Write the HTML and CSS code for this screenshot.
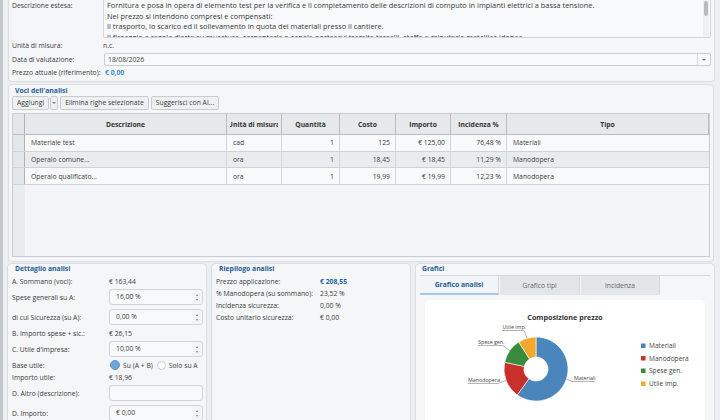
FILE: index.html
```html
<!DOCTYPE html>
<html lang="it">
<head>
    <meta charset="UTF-8">
    <meta name="viewport" content="width=device-width, initial-scale=1.0">
    <title>Analisi prezzo</title>
    <link rel="stylesheet" href="styles.css">
</head>
<body>
    <div class="info-panel">
        <div class="info-grid">
            <span class="lbl lbl-top">Descrizione estesa:</span>
            <div class="desc-box">
                <p>Fornitura e posa in opera di elemento test per la verifica e il completamento delle descrizioni di computo in impianti elettrici a bassa tensione.</p>
                <p>Nel prezzo si intendono compresi e compensati:</p>
                <p>Il trasporto, lo scarico ed il sollevamento in quota dei materiali presso il cantiere.</p>
                <p>Il fissaggio a regola d'arte su muratura, carpenteria o canale portacavi tramite tasselli, staffe e minuteria metallica idonea.</p>
                <div class="vscroll"><div class="vthumb"></div></div>
            </div>
            <span class="lbl">Unità di misura:</span>
            <span class="val">n.c.</span>
            <span class="lbl">Data di valutazione:</span>
            <div class="combo"><span class="combo-text">18/08/2026</span><span class="combo-btn"><i class="caret"></i></span></div>
            <span class="lbl">Prezzo attuale (riferimento):</span>
            <span class="val price-ref">€ 0,00</span>
        </div>
    </div>

    <div class="group voci">
        <div class="group-title">Voci dell'analisi</div>
        <div class="toolbar">
            <button class="btn">Aggiungi</button>
            <button class="btn btn-drop"><i class="caret"></i></button>
            <button class="btn">Elimina righe selezionate</button>
            <button class="btn">Suggerisci con AI...</button>
        </div>
        <div class="grid-table">
            <div class="tr th">
                <div class="rh"></div>
                <div class="td"><span>Descrizione</span></div>
                <div class="td"><span>Unità di misura</span></div>
                <div class="td"><span>Quantità</span></div>
                <div class="td"><span>Costo</span></div>
                <div class="td"><span>Importo</span></div>
                <div class="td"><span>Incidenza %</span></div>
                <div class="td"><span>Tipo</span></div>
            </div>
            <div class="tr">
                <div class="rh"></div>
                <div class="td">Materiale test</div>
                <div class="td">cad</div>
                <div class="td num">1</div>
                <div class="td num">125</div>
                <div class="td num">€ 125,00</div>
                <div class="td num">76,48 %</div>
                <div class="td">Materiali</div>
            </div>
            <div class="tr alt">
                <div class="rh"></div>
                <div class="td">Operaio comune...</div>
                <div class="td">ora</div>
                <div class="td num">1</div>
                <div class="td num">18,45</div>
                <div class="td num">€ 18,45</div>
                <div class="td num">11,29 %</div>
                <div class="td">Manodopera</div>
            </div>
            <div class="tr">
                <div class="rh"></div>
                <div class="td">Operaio qualificato...</div>
                <div class="td">ora</div>
                <div class="td num">1</div>
                <div class="td num">19,99</div>
                <div class="td num">€ 19,99</div>
                <div class="td num">12,23 %</div>
                <div class="td">Manodopera</div>
            </div>
            <div class="table-fill"></div>
        </div>
    </div>

    <div class="bottom">
        <div class="group dettaglio">
            <div class="group-title">Dettaglio analisi</div>
            <div class="drow"><span>A. Sommano (voci):</span><span>€ 163,44</span></div>
            <div class="drow field">
                <span>Spese generali su A:</span>
                <div class="input"><span class="input-text">16,00 %</span><span class="spin"><i class="up"></i><i class="down"></i></span></div>
            </div>
            <div class="drow field">
                <span>di cui Sicurezza (su A):</span>
                <div class="input"><span class="input-text">0,00 %</span><span class="spin"><i class="up"></i><i class="down"></i></span></div>
            </div>
            <div class="drow"><span>B. Importo spese + sic.:</span><span>€ 26,15</span></div>
            <div class="drow field">
                <span>C. Utile d'impresa:</span>
                <div class="input"><span class="input-text">10,00 %</span><span class="spin"><i class="up"></i><i class="down"></i></span></div>
            </div>
            <div class="drow">
                <span>Base utile:</span>
                <div class="radios">
                    <span class="radio checked"></span><span>Su (A + B)</span>
                    <span class="radio"></span><span>Solo su A</span>
                </div>
            </div>
            <div class="drow"><span>Importo utile:</span><span>€ 18,96</span></div>
            <div class="drow field">
                <span>D. Altro (descrizione):</span>
                <div class="input"><span class="input-text"></span></div>
            </div>
            <div class="drow field">
                <span>D. Importo:</span>
                <div class="input"><span class="input-text">€ 0,00</span><span class="spin"><i class="up"></i><i class="down"></i></span></div>
            </div>
        </div>

        <div class="group riepilogo">
            <div class="group-title">Riepilogo analisi</div>
            <div class="rrow"><span>Prezzo applicazione:</span><span class="price-app">€ 208,55</span></div>
            <div class="rrow"><span>% Manodopera (su sommano):</span><span>23,52 %</span></div>
            <div class="rrow"><span>Incidenza sicurezza:</span><span>0,00 %</span></div>
            <div class="rrow"><span>Costo unitario sicurezza:</span><span>€ 0,00</span></div>
        </div>

        <div class="group grafici">
            <div class="group-title">Grafici</div>
            <div class="tabs">
                <div class="tab active">Grafico analisi</div>
                <div class="tab">Grafico tipi</div>
                <div class="tab">Incidenza</div>
            </div>
            <div class="chart-card">
                <svg class="chart" width="280" height="122" viewBox="0 0 280 122">
                    <text x="140" y="19.5" text-anchor="middle" class="chart-title">Composizione prezzo</text>
                    <g stroke="#ffffff" stroke-width="0.6">
                        <path d="M111 37 A32 32 0 1 1 92.28 94.96 L103.98 78.73 A12 12 0 1 0 111 57 Z" fill="#4a86bb"/>
                        <path d="M92.28 94.96 A32 32 0 0 1 79.72 62.24 L99.27 66.46 A12 12 0 0 0 103.98 78.73 Z" fill="#c8302c"/>
                        <path d="M79.72 62.24 A32 32 0 0 1 93.71 42.07 L104.52 58.9 A12 12 0 0 0 99.27 66.46 Z" fill="#3a8b3e"/>
                        <path d="M93.71 42.07 A32 32 0 0 1 111 37 L111 57 A12 12 0 0 0 104.52 58.9 Z" fill="#f2a92b"/>
                    </g>
                    <g stroke="#666" stroke-width="0.5" fill="none">
                        <polyline points="141.5,79 147,81.5 170,81.5"/>
                        <polyline points="81,80.5 73,83.5 43,83.5"/>
                        <polyline points="85,51 78,45.5 53,45.5"/>
                        <polyline points="102,38 99,30.5 77,30.5"/>
                    </g>
                    <g class="slice-label">
                        <text x="149" y="80">Materiali</text>
                        <text x="43" y="82">Manodopera</text>
                        <text x="53" y="44">Spese gen.</text>
                        <text x="77.5" y="29">Utile imp.</text>
                    </g>
                    <g class="legend">
                        <rect x="216" y="43.5" width="4.5" height="4.5" fill="#4a86bb"/>
                        <text x="224" y="48.3">Materiali</text>
                        <rect x="216" y="56" width="4.5" height="4.5" fill="#c8302c"/>
                        <text x="224" y="60.8">Manodopera</text>
                        <rect x="216" y="68.5" width="4.5" height="4.5" fill="#3a8b3e"/>
                        <text x="224" y="73.3">Spese gen.</text>
                        <rect x="216" y="81.5" width="4.5" height="4.5" fill="#f2a92b"/>
                        <text x="224" y="86.3">Utile imp.</text>
                    </g>
                </svg>
            </div>
        </div>
    </div>
</body>
</html>
```

FILE: styles.css
```css
* {
    box-sizing: border-box;
}
html, body {
    margin: 0;
    padding: 0;
}
body {
    width: 720px;
    height: 420px;
    overflow: hidden;
    font-family: "Open Sans", "Noto Sans", sans-serif;
    font-size: 6.8px;
    color: #3c3c3c;
    background-color: #eceff2;
    border-left: 3px solid #c3c7cc;
}

/* ---- top info panel ---- */
.info-panel {
    margin: 0 5px 0 5px;
    height: 82px;
    padding: 0 3px 2px 3px;
    background: #f4f6f8;
    border: 1px solid #dadee3;
    border-top: none;
    border-radius: 0 0 4px 4px;
}
.info-grid {
    display: grid;
    grid-template-columns: 91px 1fr;
    grid-template-rows: 38px 14px 14px 13px;
    align-items: end;
}
.lbl, .val {
    line-height: 12px;
    white-space: nowrap;
}
.lbl-top {
    align-self: start;
}
.price-ref {
    color: #3d8fd1;
    font-weight: bold;
    padding-left: 2px;
}
.desc-box {
    position: relative;
    align-self: start;
    margin-top: -5px;
    height: 43px;
    border: 1px solid #d3d7dc;
    border-radius: 2px;
    background: #f8f9fb;
    padding: 4px 10px 0 3px;
    font-size: 7.4px;
    line-height: 10.7px;
    color: #383838;
    overflow: hidden;
}
.desc-box p {
    margin: 0;
    white-space: nowrap;
}
.vscroll {
    position: absolute;
    top: 0;
    right: 1px;
    width: 6px;
    height: 100%;
    background: #eef0f2;
}
.vthumb {
    margin: 5px 1px 0 1px;
    height: 15px;
    border-radius: 2px;
    background: #b8bcc1;
}
.combo {
    display: flex;
    height: 13px;
    margin-left: 1px;
    border: 1px solid #c9cdd2;
    border-radius: 2px;
    background: #f8f9fb;
}
.combo-text {
    flex: 1;
    line-height: 11px;
    padding-left: 3px;
}
.combo-btn {
    width: 13px;
    display: flex;
    align-items: center;
    justify-content: center;
    border-left: 1px solid #d8dbdf;
}
.caret {
    width: 0;
    height: 0;
    border-left: 2px solid transparent;
    border-right: 2px solid transparent;
    border-top: 2px solid #777;
}

/* ---- group boxes ---- */
.group {
    background: #f4f6f8;
    border: 1px solid #dadee3;
    border-radius: 4px;
}
.group-title {
    color: #1e5c98;
    font-weight: bold;
    height: 11px;
    line-height: 9px;
    padding-left: 3px;
    white-space: nowrap;
}

/* ---- voci dell'analisi ---- */
.voci {
    margin: 2px 6px 0 5px;
    height: 178px;
    padding: 0 3px 4px 3px;
    display: flex;
    flex-direction: column;
}
.voci .group-title {
    line-height: 11px;
}
.toolbar {
    display: flex;
    height: 14px;
    gap: 2px;
}
.btn {
    font-family: inherit;
    font-size: 6.8px;
    color: #3c3c3c;
    height: 14px;
    padding: 0 4px;
    border: 1px solid #c8ccd1;
    border-radius: 2px;
    background: #eef0f2;
    line-height: 12px;
}
.btn-drop {
    width: 8px;
    padding: 0;
    margin-left: -1px;
    display: flex;
    align-items: center;
    justify-content: center;
}
.grid-table {
    margin-top: 3px;
    height: 144px;
    border: 1px solid #c9cdd2;
    background: linear-gradient(to right, #e9ecef 12px, #f3f5f7 12px);
    display: flex;
    flex-direction: column;
    overflow: hidden;
}
.tr {
    display: grid;
    grid-template-columns: 12px 202px 55px 58px 56px 55px 56px 1fr;
    height: 16.7px;
    background: #f8f9fa;
    border-bottom: 1px solid #cfd3d7;
}
.tr.alt {
    background: #e9ecef;
}
.tr.th {
    height: 21px;
    background: #e6e9ec;
    border-bottom: 1px solid #b9bec3;
    font-weight: bold;
    color: #333;
}
.rh {
    background: #e4e7ea;
    border-right: 1px solid #aeb3b8;
}
.td {
    display: flex;
    align-items: center;
    padding: 0 6px;
    white-space: nowrap;
    overflow: hidden;
    border-right: 1px solid #d3d7db;
}
.td:last-child {
    border-right: none;
}
.th .td {
    padding: 0 3px;
    border-right: 1px solid #b9bec3;
}
.th .td span {
    display: flex;
    justify-content: center;
    width: 100%;
    overflow: hidden;
}
.td.num {
    justify-content: flex-end;
    padding-right: 5px;
}
.table-fill {
    flex: 1;
}

/* ---- bottom area ---- */
.bottom {
    display: grid;
    grid-template-columns: 200px 200px 300px;
    gap: 4px;
    margin: 1px 0 0 4px;
    height: 170px;
}
.dettaglio {
    padding: 0 3px 0 4px;
}
.drow {
    display: grid;
    grid-template-columns: 97px 94px;
    align-items: center;
    height: 12px;
    white-space: nowrap;
}
.drow.field {
    height: 20px;
}
.input {
    display: flex;
    height: 16px;
    border: 1px solid #d0d4d9;
    border-radius: 3px;
    background: #f8f9fb;
}
.input-text {
    flex: 1;
    line-height: 14px;
    padding-left: 6px;
}
.spin {
    width: 10px;
    display: flex;
    flex-direction: column;
    align-items: center;
    justify-content: space-around;
    padding: 2px 0;
    background: #f1f3f5;
    border-radius: 0 3px 3px 0;
}
.spin .up, .spin .down {
    width: 0;
    height: 0;
    border-left: 1.5px solid transparent;
    border-right: 1.5px solid transparent;
}
.spin .up {
    border-bottom: 2px solid #7a7e83;
}
.spin .down {
    border-top: 2px solid #7a7e83;
}
.radios {
    display: flex;
    align-items: center;
    gap: 3px;
    margin-left: 1px;
}
.radio {
    width: 9px;
    height: 9px;
    border-radius: 50%;
    border: 1px solid #c9cdd2;
    background: #fbfcfd;
}
.radio.checked {
    width: 10px;
    height: 10px;
    background: #6da6da;
    border-color: #5b95cc;
}
.radios .radio + span {
    margin-right: 1px;
}

.riepilogo {
    padding: 0 3px 0 4px;
}
.riepilogo .group-title {
    padding-left: 3px;
}
.rrow {
    display: grid;
    grid-template-columns: 104px 1fr;
    align-items: center;
    height: 12px;
    white-space: nowrap;
}
.price-app {
    color: #1f5ea3;
    font-weight: bold;
}

.grafici {
    padding: 0 4px 0 4px;
}
.grafici .group-title {
    padding-left: 2px;
}
.tabs {
    display: flex;
    gap: 1px;
    height: 20px;
    border-top: 1px solid #d3d7db;
}
.tab {
    display: flex;
    align-items: center;
    justify-content: center;
    background: #e3e6e9;
    color: #666;
    border-right: 1px solid #d3d7db;
}
.tab:nth-child(1) {
    width: 79px;
}
.tab:nth-child(2) {
    width: 80px;
}
.tab:nth-child(3) {
    width: 79px;
}
.tab.active {
    background: #f2f5f8;
    color: #1e5c98;
    font-weight: bold;
    border-bottom: 2px solid #a9c7e4;
}
.chart-card {
    margin: 5px 5px 0 5px;
    height: 130px;
    background: #ffffff;
    border-radius: 5px;
}
.chart {
    display: block;
    font-family: "Open Sans", "Noto Sans", sans-serif;
}
.chart-title {
    font-size: 7.2px;
    font-weight: bold;
    fill: #333;
}
.slice-label text {
    font-size: 5.3px;
    fill: #444;
}
.legend text {
    font-size: 6.6px;
    fill: #444;
}
```
